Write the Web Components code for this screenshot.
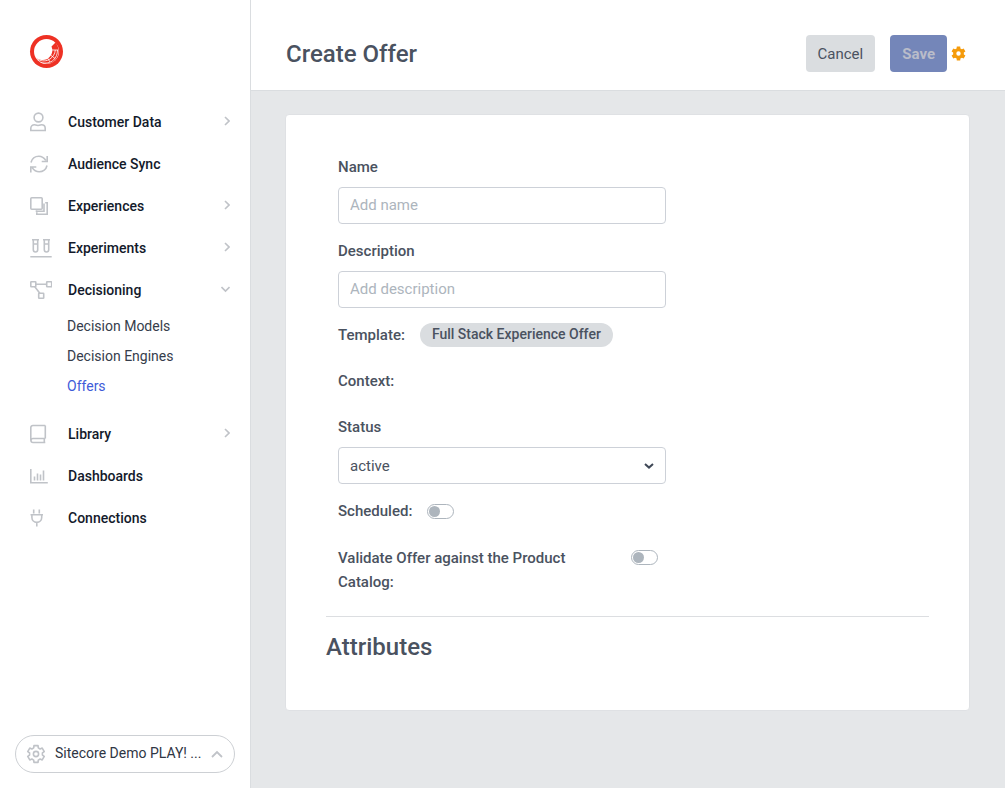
<!DOCTYPE html>
<html lang="en">
<head>
<meta charset="utf-8">
<meta name="viewport" content="width=device-width, initial-scale=1">
<title>Create Offer</title>
<style>
  body { margin: 0; font-family: Roboto, "Liberation Sans", sans-serif; font-size: 15px; line-height: 24px; color: #4a5260; background: #e5e7e9; }
</style>
</head>
<body>
<app-shell>
  <side-bar slot="side">
    <nav-item icon="user" label="Customer Data" more></nav-item>
    <nav-item icon="sync" label="Audience Sync"></nav-item>
    <nav-item icon="layers" label="Experiences" more></nav-item>
    <nav-item icon="tubes" label="Experiments" more></nav-item>
    <nav-item icon="flow" label="Decisioning" open>
      <nav-sub label="Decision Models"></nav-sub>
      <nav-sub label="Decision Engines"></nav-sub>
      <nav-sub label="Offers" current></nav-sub>
    </nav-item>
    <nav-item icon="book" label="Library" more></nav-item>
    <nav-item icon="chart" label="Dashboards"></nav-item>
    <nav-item icon="plug" label="Connections"></nav-item>
  </side-bar>
  <page-header slot="header">Create Offer</page-header>
  <offer-form></offer-form>
</app-shell>

<script>
const define = (name, html) => customElements.define(name, class extends HTMLElement {
  constructor() {
    super();
    const t = document.createElement('template');
    t.innerHTML = '<style>:host,*{box-sizing:border-box}</style>' + (typeof html === 'function' ? html(this) : html);
    this.attachShadow({ mode: 'open' }).append(t.content.cloneNode(true));
  }
});

const gear = (outer, inner, c) => {
  const pts = [];
  for (let i = 0; i < 6; i++) {
    const a = i * Math.PI / 3 - Math.PI / 2;
    [[-.36, inner], [-.24, outer], [.24, outer], [.36, inner]].forEach(([d, r]) =>
      pts.push((c + r * Math.cos(a + d)).toFixed(2) + ' ' + (c + r * Math.sin(a + d)).toFixed(2)));
  }
  return 'M' + pts.join('L') + 'Z';
};

const icons = {
  user: [18, 20, '<circle cx="8.500" cy="5.500" r="4.400"/><path d="M.8 18.500v-2.200c0-2.200 1.500-3.500 3.700-3.500.9 0 1.700.7 3.500.7s2.600-.7 3.500-.7c2.200 0 3.700 1.300 3.700 3.500v2.200z"/>'],
  sync: [18, 20, '<path d="M1 8.500C1.800 4.800 5 2.200 8.800 2.200c3 0 5.300 1.500 7 4.200M17.200 2v5.500h-5.500M17 11.500c-.8 3.700-4 6.300-7.800 6.300-3 0-5.300-1.500-7-4.200M.8 18.500V13h5.500"/>'],
  layers: [18, 20, '<rect x=".8" y="1.800" width="11.400" height="11.400" rx="1"/><path d="M14 7.500v7.700H6.500v-1M15.200 6.800h2v11.400H6.800v-2"/>'],
  tubes: [22, 20, '<path d="M2 1.800h7M13 1.800h7M3.300 2v9.800a2.200 2.200 0 0 0 4.400 0V2M14.300 2v9.800a2.200 2.200 0 0 0 4.400 0V2M3.300 6h4.400M14.300 6h4.400M.3 18.700h21.400"/>'],
  flow: [22, 20, '<rect x=".8" y="1.800" width="5" height="5" rx=".5"/><rect x="16.700" y="1.800" width="5" height="5" rx=".5"/><rect x="8.700" y="13.200" width="5" height="5" rx=".5"/><path d="M5.800 4.300h10.900M4.800 6.800l5 6.400"/>'],
  book: [18, 20, '<path d="M15.300 14.500H3a2 2 0 0 0 0 4h12.300M15.300 1.500H2.800a2 2 0 0 0-2 2v13M15.300 1.500v13M14.300 14.500v4"/>'],
  chart: [18, 20, '<path d="M.8 3v13.700h17M4.500 10.500v4M7.500 7.500v7M10.500 8.500v6M13.500 4.500v10"/>'],
  plug: [18, 20, '<path d="M3.700 1.500v4M9.300 1.500v4M.5 6.800h12.500M1.900 6.800V9.500a4.900 4.900 0 0 0 9.800 0V6.800M6.800 14.500v4"/>']
};
const svg = (w, h, body) => `<svg width="${w}" height="${h}" viewBox="0 0 ${w} ${h}" fill="none" stroke="#c0c3c8" stroke-width="1.600" aria-hidden="true">${body}</svg>`;

define('app-shell', `<style>
  :host { display: grid; grid-template-columns: 250px minmax(0, 1fr); min-height: 100vh; }
  main { border-left: 1px solid #dadde0; }
</style><slot name="side"></slot><main><slot name="header"></slot><slot></slot></main>`);

define('side-bar', `<style>
  :host { display: flex; flex-direction: column; background: #fff; }
  .logo { display: block; height: 34px; width: 34px; margin: 34px 0 33px 29px; }
  nav { flex: 1; }
  button { display: flex; align-items: center; margin: 15px; height: 38px; padding: 0 11px 0 10px; gap: 9px; border: 1px solid #cdd0d4; border-radius: 19px; background: #fff; font: 14px/20px Roboto, "Liberation Sans", sans-serif; color: #2f3644; }
  button span { flex: 1; text-align: left; white-space: nowrap; overflow: hidden; padding-bottom: 2px; }
  svg { flex: none; display: block; }
</style>
<a class="logo" href="#" aria-label="Sitecore"><svg width="34" height="34" viewBox="0 0 34 34">
  <circle cx="17.500" cy="17.500" r="16.500" fill="#ee3124"/><circle cx="17.500" cy="17.500" r="12.500" fill="#fff"/>
  <path d="M22.500 12.500l4-4C32 15 30 24 24 28c-5 3-12 2-16-3.500 5 2.500 10 2 13-2 2.500-3 3-6.500 1.500-10z" fill="#ee3124"/>
  <path d="M23 16h6M9 25.500c4 2 8.500 1.800 12-.5 3-2.200 5-5 5.300-9M11.500 28.300c5 1.700 10 .5 13-2.300 2.600-2.500 4-6 4-10M21.500 21l4.500 3.500M18.500 24l2.500 4" fill="none" stroke="#fff" stroke-width=".8"/>
</svg></a>
<nav aria-label="Main"><slot></slot></nav>
<button type="button">
  ${svg(20, 20, `<path d="${gear(8.6, 6.5, 10)}" stroke-linejoin="round"/><circle cx="10" cy="10" r="2.600"/>`)}
  <span>Sitecore Demo PLAY! ...</span>
  ${svg(12, 8, '<path d="M1 7l5-5 5 5" stroke-width="1.800"/>')}
</button>`);

define('nav-item', el => {
  const [w, h, body] = icons[el.getAttribute('icon')];
  const arrow = el.hasAttribute('open') ? svg(9, 8, '<path d="M.5 1l4 4 4-4"/>') : el.hasAttribute('more') ? svg(6, 12, '<path d="M1 1l4 4-4 4"/>') : '';
  return `<style>
  :host { display: block; }
  a { display: grid; grid-template-columns: 38px 1fr auto; align-items: center; height: 42px; padding: 0 20px 0 30px; font-size: 14px; font-weight: 500; color: #131a2b; text-decoration: none; }
  svg { display: block; }
  .sub { padding: 0 20px 12px 67px; }
</style><a href="#">${svg(w, h, body)}<span>${el.getAttribute('label')}</span>${arrow}</a>${el.hasAttribute('open') ? '<div class="sub"><slot></slot></div>' : ''}`;
});

define('nav-sub', el => `<style>
  :host { display: block; }
  a { display: block; font-size: 14px; line-height: 30px; color: #363d4b; text-decoration: none; }
  :host([current]) a { color: #3e5bd8; }
</style><a href="#">${el.getAttribute('label')}</a>`);

define('page-header', `<style>
  :host { display: flex; align-items: center; height: 91px; padding: 17px 39px 0 35px; background: #fff; border-bottom: 1px solid #dadde0; }
  h1 { flex: 1; margin: 0; font-size: 24px; line-height: 32px; font-weight: 500; }
  button { height: 37px; padding: 0 12px; border: 0; border-radius: 4px; font: 15px/24px Roboto, "Liberation Sans", sans-serif; color: #4a5260; background: #dadde0; }
  .save { margin-left: 15px; font-weight: 700; color: #b9bcc9; background: #7486b9; }
  .gear { margin-left: 4px; padding: 0; background: none; }
  svg { display: block; }
</style><h1><slot></slot></h1>
<button type="button">Cancel</button><button type="button" class="save" disabled>Save</button>
<button type="button" class="gear" aria-label="Settings"><svg width="15" height="15" viewBox="0 0 15 15"><path fill="#f59b0c" fill-rule="evenodd" d="${gear(7.2, 5.4, 7.5)}M7.500 5.300a2.200 2.200 0 1 0 0 4.400a2.200 2.200 0 0 0 0-4.400z"/></svg></button>`);

define('text-field', el => `<style>
  :host { display: block; margin-bottom: 15px; }
  label { display: block; margin-bottom: 8px; font-weight: 500; }
  input { display: block; width: 100%; height: 37px; padding: 0 11px 2px; border: 1px solid #cdd1d8; border-radius: 4px; background: #fff; font: 15px/24px Roboto, "Liberation Sans", sans-serif; color: #4a5260; }
  input::placeholder { color: #adb5bd; opacity: 1; }
</style><label for="f">${el.getAttribute('label')}</label><input id="f" type="text" placeholder="${el.getAttribute('placeholder')}">`);

define('select-field', el => `<style>
  :host { display: block; margin-bottom: 15px; }
  label { display: block; margin-bottom: 8px; font-weight: 500; }
  div { display: grid; align-items: center; }
  select, svg { grid-area: 1 / 1; }
  select { appearance: none; width: 100%; height: 37px; padding: 0 11px; border: 1px solid #cdd1d8; border-radius: 4px; background: #fff; font: 15px/24px Roboto, "Liberation Sans", sans-serif; color: #4a5260; }
  svg { justify-self: end; margin-right: 12px; pointer-events: none; }
</style><label for="f">${el.getAttribute('label')}</label>
<div><select id="f"><option>${el.getAttribute('value')}</option></select>
<svg width="10" height="8" viewBox="0 0 10 8"><path d="M1 2l4 3.600L9 2" fill="none" stroke="#3f4857" stroke-width="2"/></svg></div>`);

define('info-row', el => `<style>
  :host { display: flex; gap: 15px; margin-bottom: 22px; font-weight: 500; }
  ::slotted(span) { padding: 0 12px; height: 24px; line-height: 22px; border-radius: 12px; background: #dadde0; font-size: 14px; }
</style><span>${el.getAttribute('label')}</span><slot></slot>`);

define('toggle-row', el => `<style>
  :host { display: flex; gap: 15px; margin-bottom: 23px; font-weight: 500; }
  :host([wide]) { justify-content: space-between; margin-bottom: 22px; padding-right: 8px; }
  :host([wide]) label { flex: 0 1 240px; }
  input { appearance: none; flex: none; display: flex; align-items: center; width: 27px; height: 15px; margin: 5px 0 0; padding: 0 1px; border: 1px solid #adb5bd; border-radius: 8px; background: #fff; }
  :host([wide]) input { margin-top: 4px; }
  input::before { content: ""; width: 11px; height: 11px; border-radius: 50%; background: #adb5bd; }
  input:checked { justify-content: flex-end; }
</style><label for="f">${el.getAttribute('label')}</label><input id="f" type="checkbox" role="switch">`);

define('offer-form', `<style>
  :host { display: block; padding: 23px 35px 77px 34px; }
  form { padding: 40px; min-height: 597px; background: #fff; border: 1px solid #dfe1e4; border-radius: 4px; }
  .fields { width: calc(100% * 7 / 12); padding: 0 12px; }
  h2 { margin: 0; padding-top: 14px; border-top: 1px solid #dcdee1; font-size: 24px; line-height: 32px; font-weight: 500; }
</style><form><div class="fields">
  <text-field label="Name" placeholder="Add name"></text-field>
  <text-field label="Description" placeholder="Add description"></text-field>
  <info-row label="Template:"><span>Full Stack Experience Offer</span></info-row>
  <info-row label="Context:"></info-row>
  <select-field label="Status" value="active"></select-field>
  <toggle-row label="Scheduled:"></toggle-row>
  <toggle-row wide label="Validate Offer against the Product Catalog:"></toggle-row>
</div><h2>Attributes</h2></form>`);
</script>
</body>
</html>
